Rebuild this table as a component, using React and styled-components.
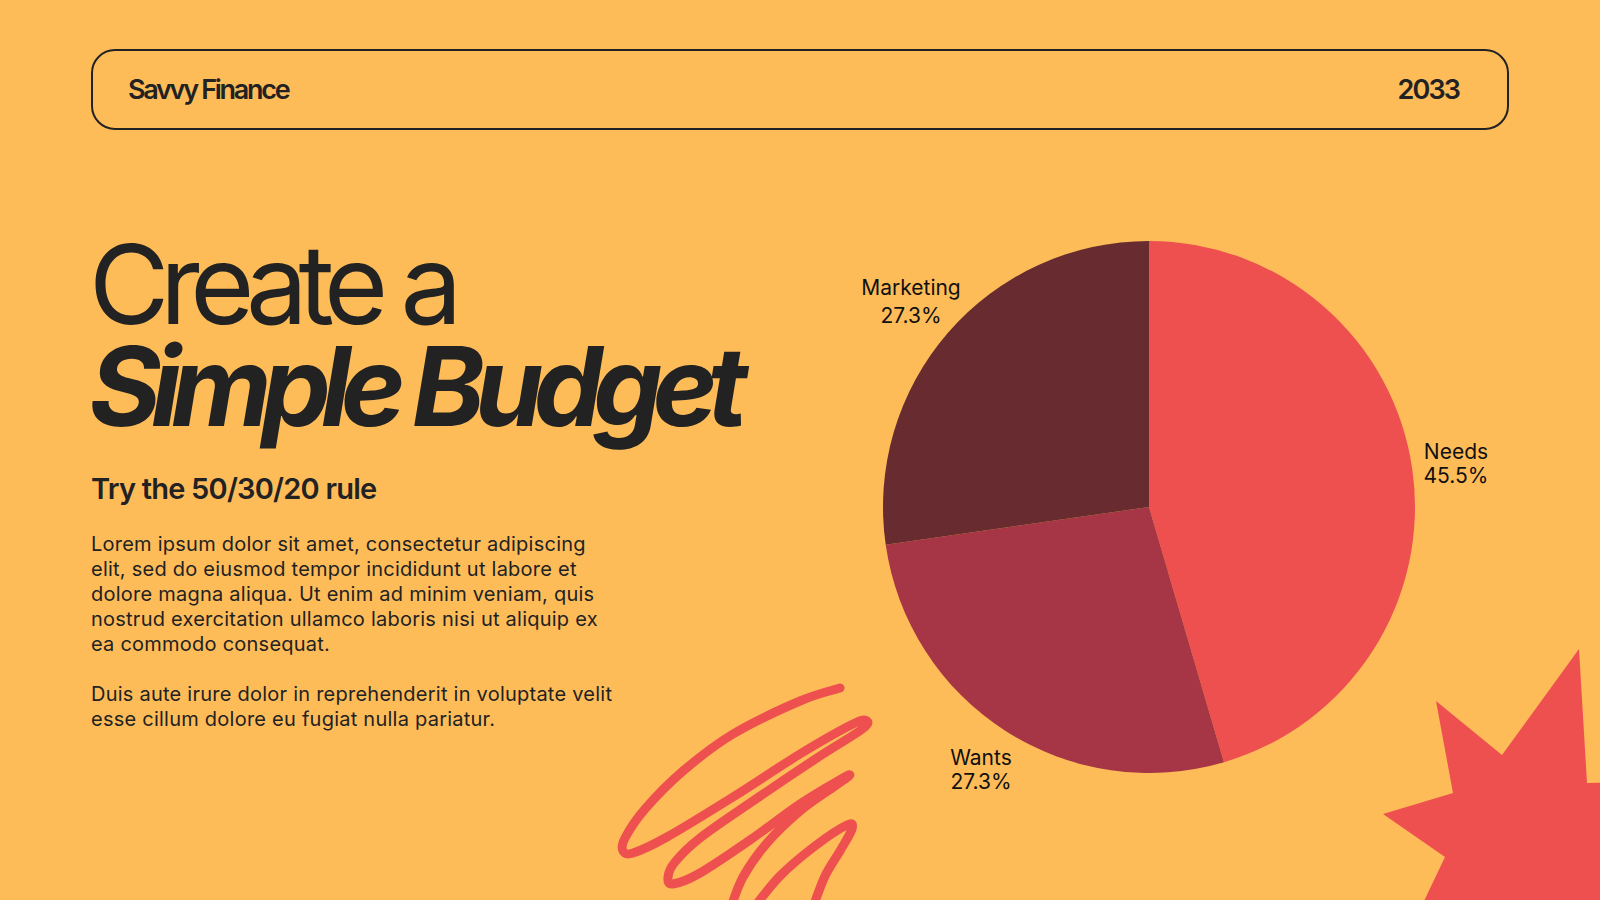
import React from 'react'
import styled, { createGlobalStyle } from 'styled-components'

const GlobalStyle = createGlobalStyle`
  html, body {
    margin: 0;
    padding: 0;
    background: #febc59;
  }
  body {
    font-family: Inter, 'Liberation Sans', sans-serif;
    color: #222;
  }
`

const colors = {
  bg: '#febc59',
  ink: '#222222',
  red: '#ee5050',
  wine: '#a63645',
  plum: '#672b30'
}

const Page = styled.div`
  position: relative;
  width: 1600px;
  height: 900px;
  box-sizing: border-box;
  padding: 49px 91px 0;
  overflow: hidden;
  background: ${colors.bg};
`

const Header = styled.header`
  height: 81px;
  box-sizing: border-box;
  border: 2px solid ${colors.ink};
  border-radius: 24px;
  display: flex;
  align-items: center;
  justify-content: space-between;
  padding: 0 48px 0 35px;
`

const HeaderText = styled.span`
  font-size: 27px;
  font-weight: 600;
  letter-spacing: ${(p) => (p.$tight ? '-0.085em' : '-0.07em')};
  color: ${colors.ink};
`

const Main = styled.main`
  display: grid;
  grid-template-columns: 729px 1fr;
  margin-top: 90px;
`

const Intro = styled.section`
  padding-top: 13px;
`

const Title = styled.h1`
  margin: 0 0 0 -2px;
  font-size: 110px;
  font-weight: 400;
  line-height: 102px;
  letter-spacing: -0.085em;
  color: ${colors.ink};
`

const TitleLine = styled.span`
  display: block;
  font-weight: ${(p) => (p.$strong ? 700 : 400)};
  font-style: ${(p) => (p.$strong ? 'italic' : 'normal')};
  letter-spacing: ${(p) => (p.$strong ? '-0.09em' : '-0.085em')};
`

const Subtitle = styled.h2`
  margin: 36px 0 0;
  font-size: 29px;
  font-weight: 600;
  line-height: 32px;
  letter-spacing: -0.027em;
  color: ${colors.ink};
`

const Body = styled.p`
  margin: ${(p) => (p.$first ? '27px' : '25px')} 0 0;
  width: 530px;
  font-size: 20px;
  line-height: 25px;
  letter-spacing: 0.012em;
  color: ${colors.ink};
`

const ChartWrap = styled.section`
  display: flex;
`

const ChartLabel = styled.text`
  font-family: Inter, 'Liberation Sans', sans-serif;
  font-size: 21px;
  fill: #111;
`

const Deco = styled.svg`
  position: absolute;
  left: 0;
  top: 0;
  pointer-events: none;
`

const slices = [
  { name: 'Needs', value: 45.5, color: colors.red },
  { name: 'Wants', value: 27.3, color: colors.wine },
  { name: 'Marketing', value: 27.3, color: colors.plum }
]

const labels = [
  { x: 1456, y: [459, 483], lines: ['Needs', '45.5%'] },
  { x: 981, y: [765, 789], lines: ['Wants', '27.3%'] },
  { x: 911, y: [295, 323], lines: ['Marketing', '27.3%'] }
]

const CX = 1149
const CY = 507
const R = 266

const point = (deg) => {
  const a = (deg * Math.PI) / 180
  return [CX + R * Math.sin(a), CY - R * Math.cos(a)]
}

const slicePath = (from, to) => {
  const [x1, y1] = point(from)
  const [x2, y2] = point(to)
  const large = to - from > 180 ? 1 : 0
  return `M${CX} ${CY} L${x1} ${y1} A${R} ${R} 0 ${large} 1 ${x2} ${y2} Z`
}

const PieChart = () => {
  const total = slices.reduce((s, d) => s + d.value, 0)
  let start = 0
  return (
    <svg width='689' height='600' viewBox='820 220 689 600'>
      {slices.map((s) => {
        const end = start + (s.value / total) * 360
        const d = slicePath(start, end)
        start = end
        return <path key={s.name} d={d} fill={s.color} />
      })}
      {labels.map((l) =>
        l.lines.map((t, i) => (
          <ChartLabel key={t + i} x={l.x} y={l.y[i]} textAnchor='middle'>
            {t}
          </ChartLabel>
        ))
      )}
    </svg>
  )
}

// catmull-rom through the points, gives the scribble its loose curves
const smooth = (pts) => {
  let d = `M${pts[0][0]} ${pts[0][1]}`
  for (let i = 0; i < pts.length - 1; i++) {
    const p0 = pts[i - 1] || pts[i]
    const p1 = pts[i]
    const p2 = pts[i + 1]
    const p3 = pts[i + 2] || p2
    const c1 = [p1[0] + (p2[0] - p0[0]) / 6, p1[1] + (p2[1] - p0[1]) / 6]
    const c2 = [p2[0] - (p3[0] - p1[0]) / 6, p2[1] - (p3[1] - p1[1]) / 6]
    d += ` C${c1[0]} ${c1[1]} ${c2[0]} ${c2[1]} ${p2[0]} ${p2[1]}`
  }
  return d
}

const scribbleA = [
  [840, 688], [800, 701], [733, 734], [683, 771], [645, 809], [625, 838],
  [623, 851], [633, 853], [667, 837], [733, 797], [800, 754], [853, 724],
  [867, 721], [861, 730], [817, 758], [750, 803], [700, 838], [675, 862],
  [668, 877], [673, 884], [700, 873], [750, 840], [800, 804], [843, 778],
  [849, 776], [835, 786], [800, 811], [767, 843], [743, 877], [730, 910]
]

const scribbleB = [
  [752, 910], [780, 876], [815, 846], [847, 825], [852, 829], [840, 851],
  [825, 876], [812, 910]
]

const Scribble = () => (
  <Deco width='1600' height='900' viewBox='0 0 1600 900'>
    <g fill='none' stroke={colors.red} strokeWidth='9' strokeLinecap='round' strokeLinejoin='round'>
      <path d={smooth(scribbleA)} />
      <path d={smooth(scribbleB)} />
    </g>
    <polygon
      fill={colors.red}
      points='1579,649 1502,755 1436,701 1453,793 1383,814 1445,857 1415,920 1640,920 1640,782 1587,783'
    />
  </Deco>
)

const App = () => (
  <>
    <GlobalStyle />
    <Page>
      <Header>
        <HeaderText $tight>Savvy Finance</HeaderText>
        <HeaderText>2033</HeaderText>
      </Header>
      <Main>
        <Intro>
          <Title>
            <TitleLine>Create a</TitleLine>
            <TitleLine $strong>Simple Budget</TitleLine>
          </Title>
          <Subtitle>Try the 50/30/20 rule</Subtitle>
          <Body $first>
            Lorem ipsum dolor sit amet, consectetur adipiscing elit, sed do
            eiusmod tempor incididunt ut labore et dolore magna aliqua. Ut enim
            ad minim veniam, quis nostrud exercitation ullamco laboris nisi ut
            aliquip ex ea commodo consequat.
          </Body>
          <Body>
            Duis aute irure dolor in reprehenderit in voluptate velit esse
            cillum dolore eu fugiat nulla pariatur.
          </Body>
        </Intro>
        <ChartWrap>
          <PieChart />
        </ChartWrap>
      </Main>
      <Scribble />
    </Page>
  </>
)

export default App
